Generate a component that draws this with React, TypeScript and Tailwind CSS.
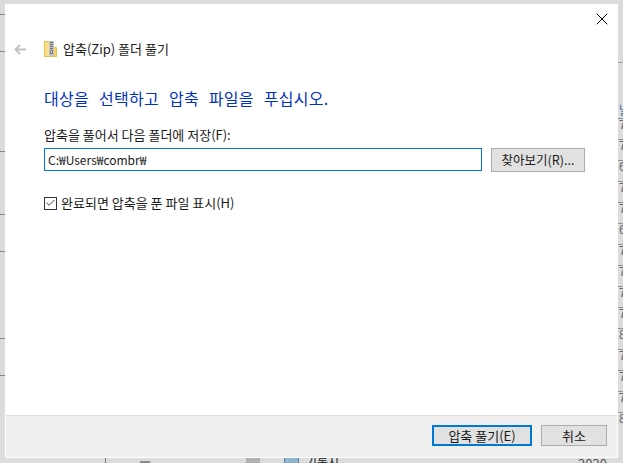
import { Check, X } from "lucide-react";

const font = "font-['Noto_Sans_CJK_KR','Liberation_Sans',sans-serif]";

// rows of the file list behind the dialog, seen along its right edge
const behindRows = [
  { top: "top-[118px]", text: "7" },
  { top: "top-[139px]", text: "7" },
  { top: "top-[160px]", text: "6" },
  { top: "top-[181px]", text: "7" },
  { top: "top-[202px]", text: "7" },
  { top: "top-[223px]", text: "6" },
  { top: "top-[244px]", text: "7" },
  { top: "top-[265px]", text: "7" },
  { top: "top-[286px]", text: "7" },
  { top: "top-[307px]", text: "7" },
  { top: "top-[328px]", text: "8" },
  { top: "top-[349px]", text: "7" },
  { top: "top-[370px]", text: "7" },
  { top: "top-[391px]", text: "7" },
  { top: "top-[412px]", text: "8" },
];

const leftLines = ["top-[14px]", "top-[51px]", "top-[151px]", "top-[214px]", "top-[251px]", "top-[338px]", "top-[375px]"];

function ZipIcon() {
  return (
    <svg width="13" height="16" viewBox="0 0 13 16" className="block">
      <path d="M0.5 0.5h9v15h-9z" fill="#f8df8c" stroke="#e6c04c" />
      <path d="M9.5 6.5h3v9h-3z" fill="#f3d263" stroke="#e6c04c" />
      <rect x="5" y="0" width="5" height="15" fill="#c4c4c4" />
      <path d="M6 1.5h3M6 3.5h3M6 5.5h3M6 7.5h3" stroke="#6e6e6e" strokeWidth="1" />
      <rect x="6" y="9" width="3" height="4" fill="#757575" />
      <rect x="7" y="10" width="1" height="2" fill="#e4e4e4" />
    </svg>
  );
}

export default function App() {
  return (
    <div className={`relative w-[623px] h-[463px] overflow-hidden bg-[#dcdcdc] ${font}`}>
      {/* window behind the dialog */}
      {leftLines.map((top) => (
        <div key={top} className={`absolute left-0 w-[5px] h-px bg-[#7d8a96] ${top}`} />
      ))}
      <div className="absolute left-[618px] top-[62px] w-[5px] h-px bg-[#9aa2aa]" />
      <span className="absolute left-[619px] top-[105px] text-[12px] leading-[10px] text-[#3f6f9f]">날</span>
      {behindRows.map((row) => (
        <div key={row.top} className={`absolute left-[618px] w-[5px] ${row.top}`}>
          <div className="h-px bg-[#8a929a]" />
          <span className="block pl-px text-[12px] leading-[10px] text-[#5f6670]">{row.text}</span>
        </div>
      ))}
      <div className="absolute left-[105px] top-[458px] h-[5px] w-px bg-[#777]" />
      <div className="absolute left-[140px] top-[461px] h-[2px] w-[10px] bg-[#8a8a8a]" />
      <div className="absolute left-[246px] top-[458px] h-[5px] w-[14px] bg-[#b0b0b0]" />
      <div className="absolute left-[284px] top-[458px] w-[15px] h-[5px] bg-[#8fb4d0] border-x border-[#5f7f9c]" />
      <span className="absolute left-[306px] top-[454px] text-[12px] leading-[16px] text-[#222]">기록지</span>
      <span className="absolute left-[578px] top-[456px] text-[13px] leading-[16px] text-[#555]">2020-07</span>

      {/* dialog */}
      <div className="absolute left-[5px] top-[4px] w-[613px] h-[454px] bg-white flex flex-col">
        <div className="flex justify-end pt-[5px] pr-[6px] h-[30px]">
          <X size={20} strokeWidth={1} className="text-black" absoluteStrokeWidth />
        </div>
        <div className="flex items-center pl-[9px] h-[30px]">
          <svg width="12" height="11" viewBox="0 0 12 11" fill="none" stroke="#c0c0c0" strokeWidth="1.8">
            <path d="M12 5.5H1.5M6 1L1.5 5.5 6 10" />
          </svg>
          <div className="ml-[18px]">
            <ZipIcon />
          </div>
          <span className="ml-[6px] text-[13px] text-[#1a1a1a]">압축(Zip) 폴더 풀기</span>
        </div>
        <div className="flex-1 flex flex-col pl-[39px] pr-[33px]">
          <h1 className="mt-[23px] text-[16px] leading-[22px] font-normal tracking-[0.3px] [word-spacing:6px] text-[#0033bc]">
            대상을 선택하고 압축 파일을 푸십시오.
          </h1>
          <label className="mt-[17px] text-[13px] leading-[18px] text-[#1a1a1a]">
            압축을 풀어서 다음 폴더에 저장(F):
          </label>
          <div className="mt-[4px] flex gap-[9px]">
            <div className="w-[438px] h-[23px] border border-[#0078d7] flex items-center pl-[3px] text-[12px] text-[#1a1a1a]">
              C:₩Users₩combr₩
            </div>
            <button className="w-[94px] h-[24px] border border-[#adadad] bg-[#e1e1e1] text-[12.5px] text-[#1a1a1a]">
              찾아보기(R)...
            </button>
          </div>
          <div className="mt-[22px] flex items-center gap-[4px]">
            <div className="w-[13px] h-[13px] border border-[#333] flex items-center justify-center">
              <Check size={12} strokeWidth={2} className="text-[#333]" />
            </div>
            <span className="text-[13px] leading-[18px] text-[#1a1a1a]">완료되면 압축을 푼 파일 표시(H)</span>
          </div>
        </div>
        <div className="h-[42px] mx-px mb-px border-t border-[#dfdfdf] bg-[#efefef] flex items-start justify-end gap-[9px] pt-[9px] pr-[10px]">
          <button className="w-[100px] h-[21px] border-2 border-[#0078d7] bg-[#e1e1e1] text-[13px] leading-none text-[#1a1a1a]">
            압축 풀기(E)
          </button>
          <button className="w-[66px] h-[21px] border border-[#adadad] bg-[#e1e1e1] text-[13px] leading-none text-[#1a1a1a]">
            취소
          </button>
        </div>
      </div>
    </div>
  );
}
